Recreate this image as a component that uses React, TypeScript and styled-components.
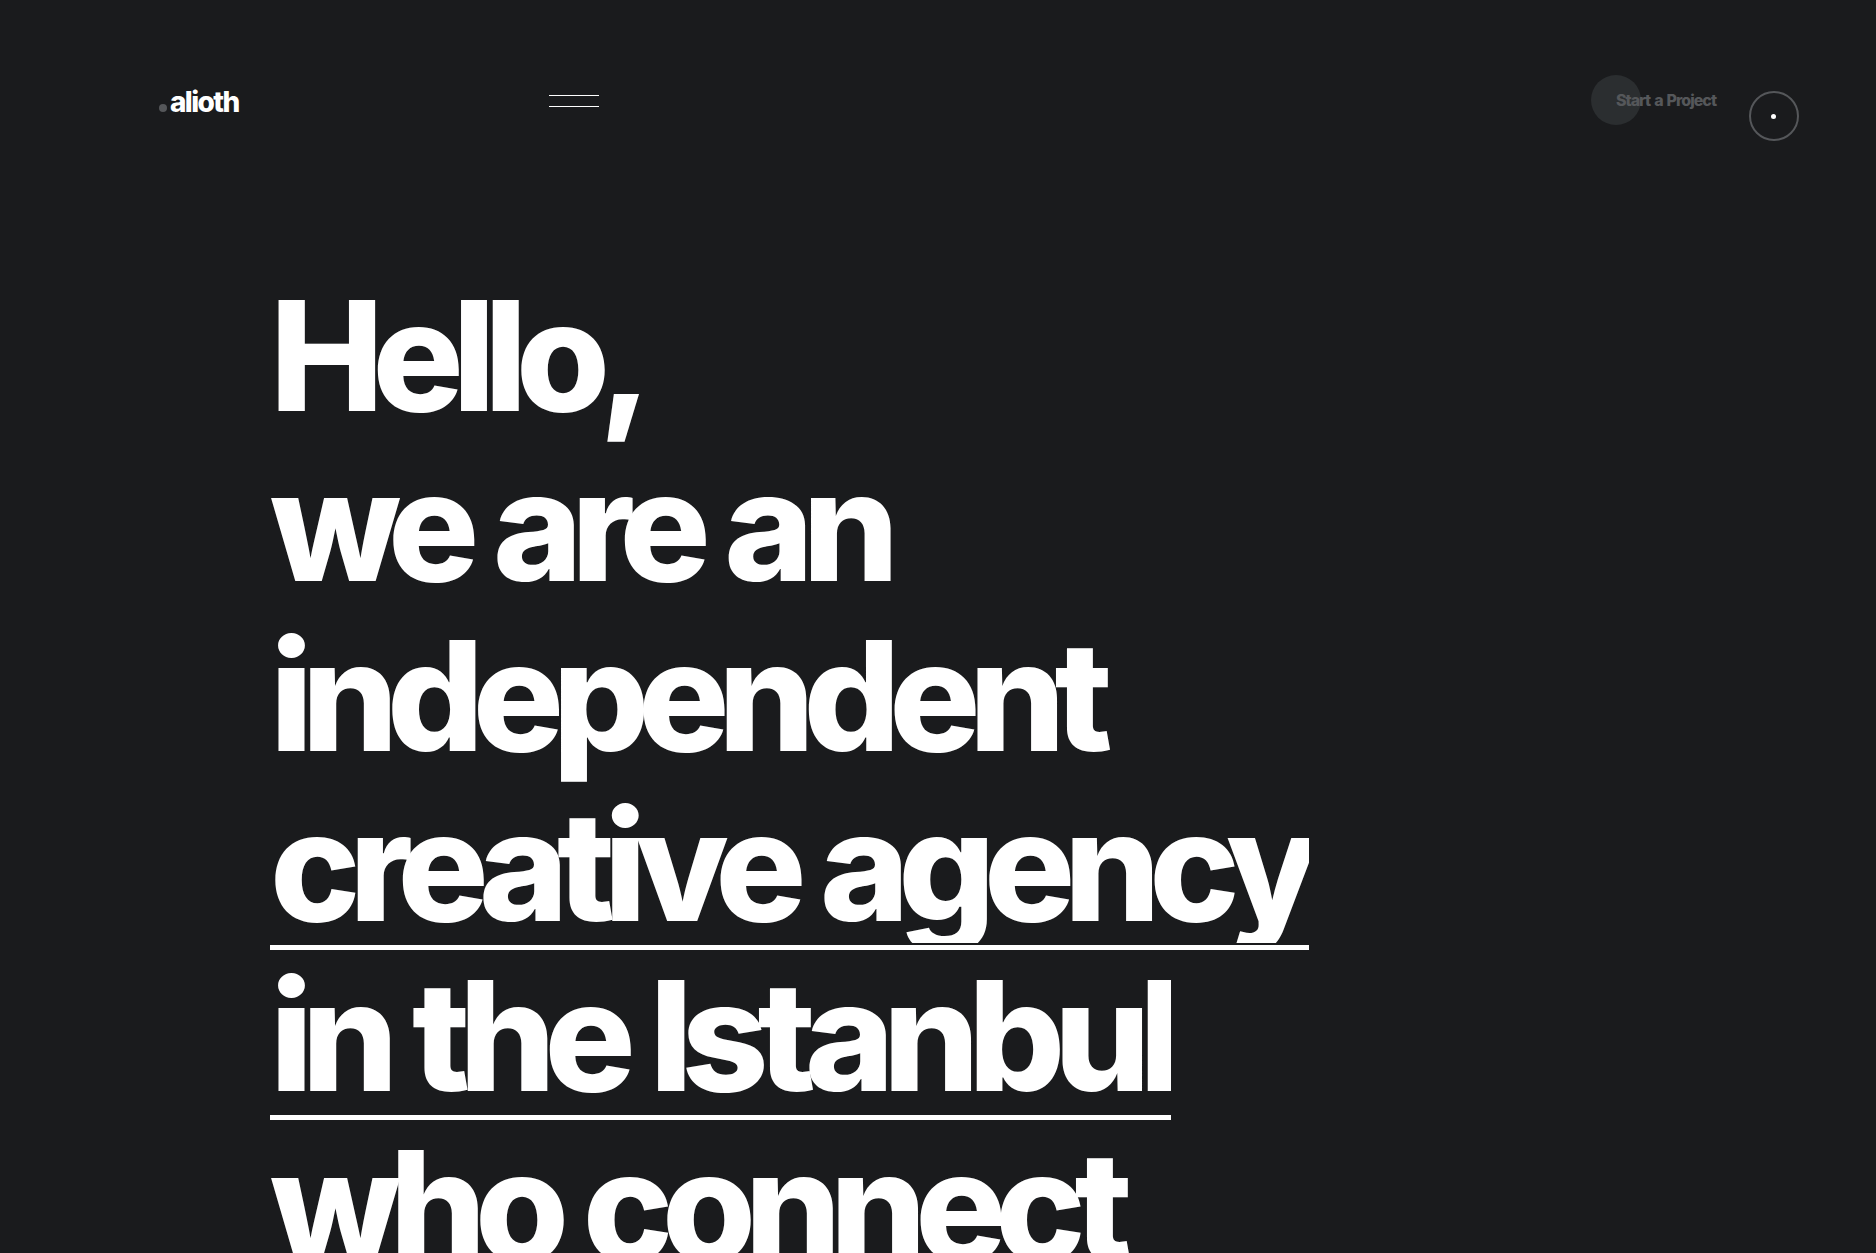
import React from "react";
import styled, { createGlobalStyle } from "styled-components";

const GlobalStyle = createGlobalStyle`
  html, body {
    margin: 0;
    height: 100%;
    overflow: hidden;
    background: #1a1b1d;
  }
  body {
    font-family: Inter, "Liberation Sans", sans-serif;
    color: #fff;
  }
`;

const Page = styled.div`
  height: 100vh;
  overflow: hidden;
`;

const Header = styled.header`
  display: flex;
  align-items: center;
  height: 50px;
  padding: 75px 159px 0;
`;

const Logo = styled.div`
  display: flex;
  align-items: baseline;
  width: 390px;
  padding-top: 4px;
  font-size: 28px;
  font-weight: 800;
  letter-spacing: -1.6px;
`;

const LogoDot = styled.span`
  width: 8px;
  height: 8px;
  margin-right: 3px;
  border-radius: 50%;
  background: #55575a;
`;

const MenuToggle = styled.button`
  display: flex;
  flex-direction: column;
  gap: 10px;
  width: 50px;
  padding: 2px 0 0;
  border: 0;
  background: none;
`;

const MenuLine = styled.span`
  height: 1px;
  background: #fff;
`;

const StartButton = styled.a`
  position: relative;
  margin-left: auto;
  margin-right: 1px;
  padding-left: 25px;
  font-size: 16px;
  font-weight: 800;
  letter-spacing: -1px;
  word-spacing: 1.5px;
  color: #55575a;

  &::before {
    content: "";
    position: absolute;
    left: 0;
    top: 50%;
    width: 50px;
    height: 50px;
    border-radius: 50%;
    background: #2b2e30;
    transform: translateY(-50%);
  }
`;

const StartLabel = styled.span`
  position: relative;
`;

const Cursor = styled.div`
  position: fixed;
  left: 1749px;
  top: 91px;
  display: flex;
  align-items: center;
  justify-content: center;
  box-sizing: border-box;
  width: 50px;
  height: 50px;
  border: 2px solid #55575a;
  border-radius: 50%;
`;

const CursorDot = styled.span`
  width: 5px;
  height: 5px;
  margin-left: -1px;
  border-radius: 50%;
  background: #fff;
`;

const Hero = styled.h1`
  margin: 146px 0 0 270px;
  font-size: 152px;
  font-weight: 760;
  line-height: 170px;
  letter-spacing: -11.3px;
  word-spacing: 3px;
`;

const Line = styled.div`
  height: 170px;
  white-space: nowrap;
`;

const Underlined = styled.span`
  display: inline-block;
  padding-bottom: 2px;
  vertical-align: top;
  border-bottom: 5px solid #fff;
`;

const Clip = styled.span`
  display: block;
  height: 162px;
  overflow: hidden;
`;

export default function App() {
  return (
    <Page>
      <GlobalStyle />
      <Header>
        <Logo>
          <LogoDot />
          alioth
        </Logo>
        <MenuToggle>
          <MenuLine />
          <MenuLine />
        </MenuToggle>
        <StartButton>
          <StartLabel>Start a Project</StartLabel>
        </StartButton>
      </Header>
      <Hero>
        <Line>Hello,</Line>
        <Line>we are an</Line>
        <Line>independent</Line>
        <Line>
          <Underlined>
            <Clip>creative agency</Clip>
          </Underlined>
        </Line>
        <Line>
          <Underlined>
            <Clip>in the Istanbul</Clip>
          </Underlined>
        </Line>
        <Line>who connect</Line>
      </Hero>
      <Cursor>
        <CursorDot />
      </Cursor>
    </Page>
  );
}
